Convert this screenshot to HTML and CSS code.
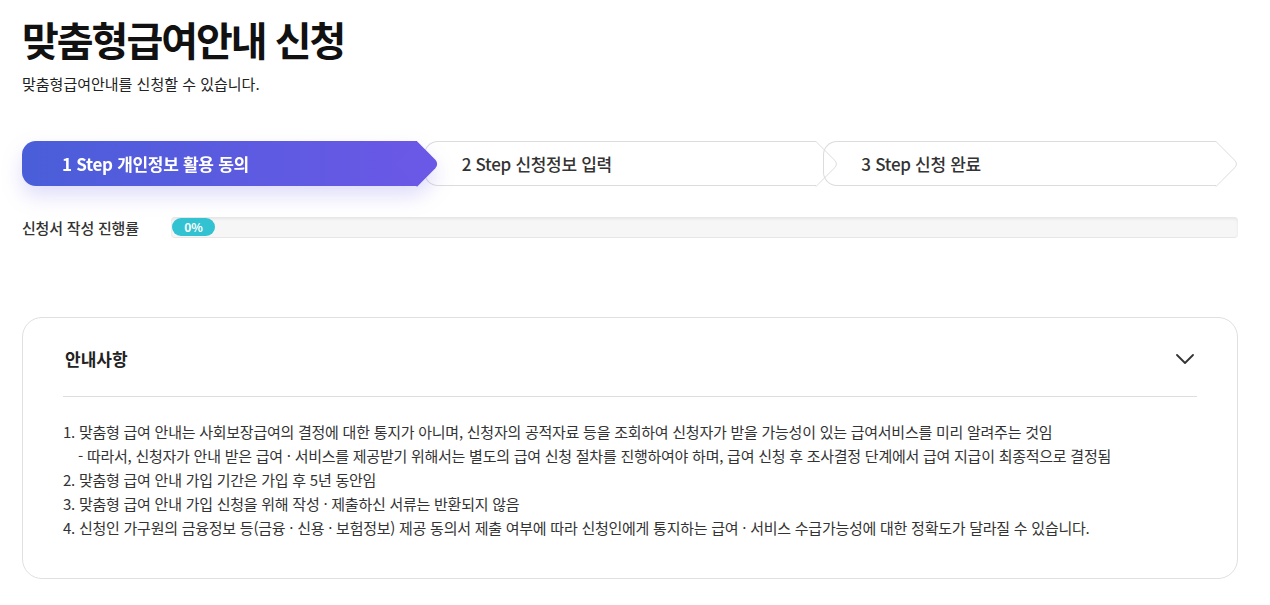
FILE: index.html
```html
<!DOCTYPE html>
<html lang="ko">
<head>
<meta charset="utf-8">
<title>맞춤형급여안내 신청</title>
<link rel="stylesheet" href="styles.css">
</head>
<body>
<div class="page">
  <h1 class="title">맞춤형급여안내 신청</h1>
  <p class="desc">맞춤형급여안내를 신청할 수 있습니다.</p>

  <div class="steps">
    <div class="step step-active"><span>1 Step 개인정보 활용 동의</span></div>
    <div class="step"><span>2 Step 신청정보 입력</span></div>
    <div class="step"><span>3 Step 신청 완료</span></div>
  </div>

  <div class="progress-row">
    <span class="progress-label">신청서 작성 진행률</span>
    <div class="progress-track">
      <div class="progress-fill">0%</div>
    </div>
  </div>

  <section class="card">
    <div class="card-head">
      <h2 class="card-title">안내사항</h2>
      <svg class="chev" width="18" height="10" viewBox="0 0 18 10" aria-hidden="true">
        <path d="M1 1 L9 9 L17 1" fill="none" stroke="#333" stroke-width="1.8" stroke-linecap="round" stroke-linejoin="round"/>
      </svg>
    </div>
    <ul class="notes">
      <li>1. 맞춤형 급여 안내는 사회보장급여의 결정에 대한 통지가 아니며, 신청자의 공적자료 등을 조회하여 신청자가 받을 가능성이 있는 급여서비스를 미리 알려주는 것임
        <p class="sub">- 따라서, 신청자가 안내 받은 급여 · 서비스를 제공받기 위해서는 별도의 급여 신청 절차를 진행하여야 하며, 급여 신청 후 조사결정 단계에서 급여 지급이 최종적으로 결정됨</p>
      </li>
      <li>2. 맞춤형 급여 안내 가입 기간은 가입 후 5년 동안임</li>
      <li>3. 맞춤형 급여 안내 가입 신청을 위해 작성 · 제출하신 서류는 반환되지 않음</li>
      <li>4. 신청인 가구원의 금융정보 등(금융 · 신용 · 보험정보) 제공 동의서 제출 여부에 따라 신청인에게 통지하는 급여 · 서비스 수급가능성에 대한 정확도가 달라질 수 있습니다.</li>
    </ul>
  </section>
</div>
</body>
</html>
```

FILE: styles.css
```css
* { box-sizing: border-box; }

body {
  margin: 0;
  background: #fff;
  font-family: "Noto Sans CJK KR", "Noto Sans", sans-serif;
  color: #111;
}

.page {
  width: 1238px;
  padding: 12px 0 0 22px;
}

.title {
  margin: 0;
  font-size: 40px;
  line-height: 54px;
  font-weight: 700;
  letter-spacing: -2px;
  color: #111;
}

.desc {
  margin: 8px 0 0;
  font-size: 15px;
  line-height: 20px;
  color: #222;
}

/* steps */
.steps {
  display: flex;
  gap: 7px;
  padding-right: 22px;
  margin-top: 47px;
  height: 45px;
}

.step {
  position: relative;
  flex: 1;
  height: 45px;
  display: flex;
  align-items: center;
  padding-left: 37px;
  border: 1px solid #dcdcdc;
  border-right: none;
  border-radius: 14px 0 0 14px;
  font-size: 17px;
  font-weight: 500;
  color: #333;
  letter-spacing: -0.3px;
}

.step::after {
  content: "";
  position: absolute;
  top: 50%;
  right: 0;
  width: 32px;
  height: 32px;
  border-top: 1px solid #dcdcdc;
  border-right: 1px solid #dcdcdc;
  border-top-right-radius: 6px;
  transform: translate(50%, -50%) rotate(45deg);
}

.step span { position: relative; z-index: 1; }

.step-active {
  z-index: 2;
  border: none;
  padding-left: 40px;
  background: linear-gradient(90deg, #4a5ed9 0%, #6a58e6 100%);
  color: #fff;
  font-weight: 700;
  filter: drop-shadow(0 10px 10px rgba(95, 85, 225, 0.2));
}

.step-active::after {
  border: none;
  background: #6a58e6;
  width: 32px;
  height: 32px;
}

/* progress */
.progress-row {
  display: flex;
  align-items: center;
  margin-top: 31px;
}

.progress-label {
  width: 149px;
  flex: none;
  font-size: 15px;
  font-weight: 500;
  color: #333;
  letter-spacing: -0.2px;
}

.progress-track {
  flex: 1;
  height: 21px;
  display: flex;
  align-items: center;
  background: #f6f6f6;
  border-radius: 4px;
  border-bottom: 1px solid #e6e6e6;
  box-shadow: inset 0 2px 3px rgba(0, 0, 0, 0.07);
}

.progress-fill {
  width: 43px;
  height: 18px;
  margin-left: 1px;
  border-radius: 9px;
  background: #33c2d1;
  color: #fff;
  font-size: 12px;
  font-weight: 700;
  line-height: 18px;
  text-align: center;
}

/* card */
.card {
  margin-top: 79px;
  border: 1px solid #e0e0e0;
  border-radius: 20px;
  padding: 0 40px 38px;
}

.card-head {
  display: flex;
  align-items: center;
  justify-content: space-between;
  height: 79px;
  padding-top: 3px;
  border-bottom: 1px solid #dedede;
}

.card-title {
  margin: 0 0 0 2px;
  font-size: 17px;
  font-weight: 700;
  color: #222;
}

.chev { margin-right: 3px; }

.notes {
  list-style: none;
  margin: 0;
  padding: 23px 0 0;
  font-size: 15px;
  line-height: 24px;
  color: #333;
  letter-spacing: -0.25px;
}

.notes li { margin: 0; }

.sub {
  margin: 0;
  padding-left: 15px;
}
```
